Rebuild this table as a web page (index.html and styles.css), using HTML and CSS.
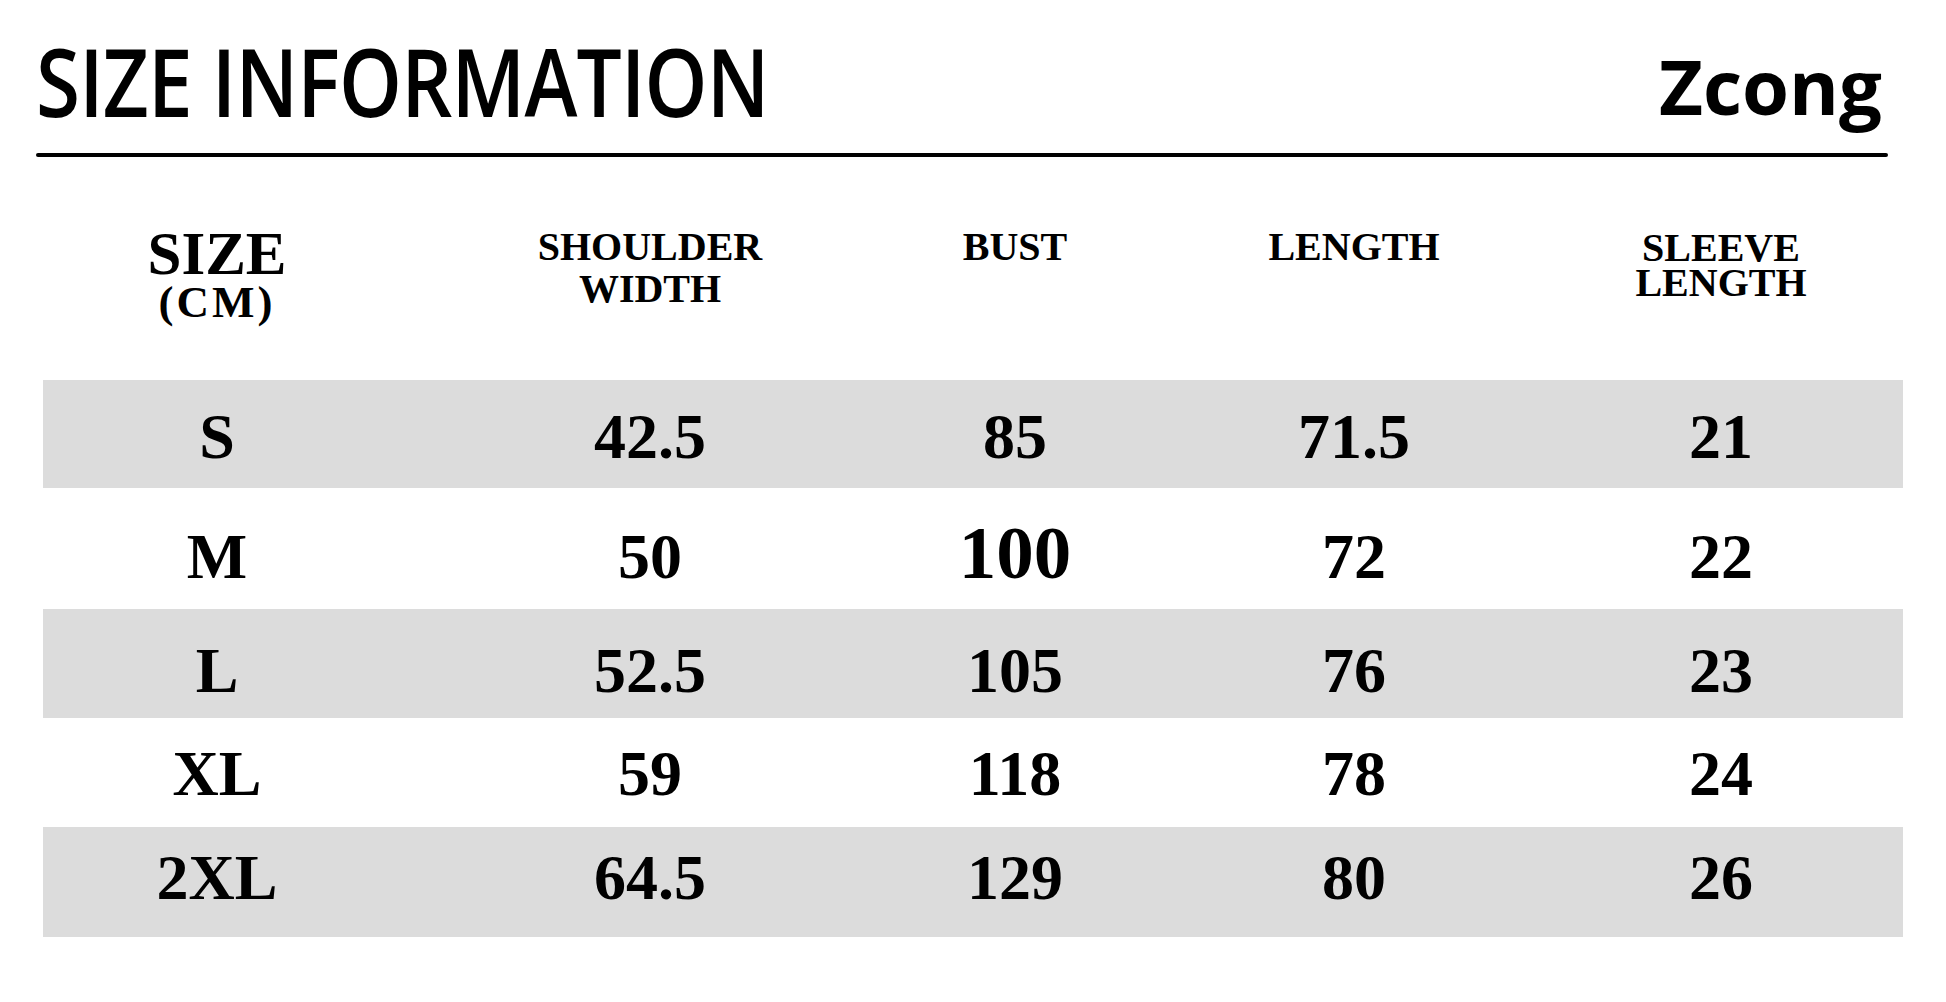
FILE: index.html
```html
<!DOCTYPE html>
<html lang="en">
<head>
<meta charset="utf-8">
<title>Size Information</title>
<link rel="stylesheet" href="styles.css">
</head>
<body>
<div class="sheet">
  <header class="topbar">
    <h1 class="title">SIZE INFORMATION</h1>
    <div class="brand">Zcong</div>
  </header>
  <div class="rule"></div>

  <div class="table">
    <div class="row head">
      <div class="cell size-head">
        <div class="size-main">SIZE</div>
        <div class="size-unit">(CM)</div>
      </div>
      <div class="cell col-head">SHOULDER<br>WIDTH</div>
      <div class="cell col-head">BUST</div>
      <div class="cell col-head">LENGTH</div>
      <div class="cell col-head col-head--tight">SLEEVE<br>LENGTH</div>
    </div>

    <div class="row data shade r-s">
      <div class="cell">S</div>
      <div class="cell">42.5</div>
      <div class="cell">85</div>
      <div class="cell">71.5</div>
      <div class="cell">21</div>
    </div>
    <div class="row data r-m">
      <div class="cell">M</div>
      <div class="cell">50</div>
      <div class="cell big">100</div>
      <div class="cell">72</div>
      <div class="cell">22</div>
    </div>
    <div class="row data shade r-l">
      <div class="cell">L</div>
      <div class="cell">52.5</div>
      <div class="cell">105</div>
      <div class="cell">76</div>
      <div class="cell">23</div>
    </div>
    <div class="row data r-xl">
      <div class="cell">XL</div>
      <div class="cell">59</div>
      <div class="cell">118</div>
      <div class="cell">78</div>
      <div class="cell">24</div>
    </div>
    <div class="row data shade r-2xl">
      <div class="cell">2XL</div>
      <div class="cell">64.5</div>
      <div class="cell">129</div>
      <div class="cell">80</div>
      <div class="cell">26</div>
    </div>
  </div>
</div>
</body>
</html>
```

FILE: styles.css
```css
* { box-sizing: border-box; }

html, body {
  margin: 0;
  padding: 0;
  background: #ffffff;
  color: #000000;
}

.sheet {
  width: 1946px;
  height: 1002px;
  overflow: hidden;
}

.topbar {
  display: flex;
  justify-content: space-between;
  align-items: flex-start;
  padding: 31px 64px 0 36px;
}

.title {
  margin: 0;
  font-family: "Open Sans", "Noto Sans", sans-serif;
  font-weight: 600;
  font-size: 94px;
  line-height: 100px;
  letter-spacing: -1px;
  white-space: nowrap;
  transform: scaleX(0.852);
  transform-origin: left center;
}

.brand {
  margin-top: 17px;
  font-family: "Open Sans", "Noto Sans", sans-serif;
  font-weight: 700;
  font-size: 76px;
  line-height: 76px;
}

.rule {
  margin: 22px 58px 0 36px;
  height: 4px;
  border-radius: 2px;
  background: #000;
}

.table {
  margin-left: 43px;
  width: 1860px;
  font-family: "Liberation Serif", "Times New Roman", serif;
  font-weight: 700;
}

.row {
  display: grid;
  grid-template-columns: 348px 518px 212px 466px 268px 1fr;
}

.cell {
  text-align: center;
  white-space: nowrap;
}

.head {
  height: 223px;
  padding-top: 69px;
  align-items: start;
}

.col-head {
  font-size: 40px;
  line-height: 42px;
}

.col-head--tight {
  line-height: 35px;
  padding-top: 4px;
}

.size-main {
  font-size: 61px;
  line-height: 56px;
}

.size-unit {
  font-size: 45px;
  line-height: 40px;
  letter-spacing: 3px;
}

.data {
  align-items: baseline;
}

.data .cell {
  font-size: 64px;
  line-height: 62px;
}

.data .big {
  font-size: 75px;
  line-height: 74px;
}

.shade {
  background: #dcdcdc;
}

.r-s   { height: 108px; padding-top: 26px; }
.r-m   { height: 121px; padding-top: 28px; }
.r-l   { height: 109px; padding-top: 31px; }
.r-xl  { height: 109px; padding-top: 25px; }
.r-2xl { height: 110px; padding-top: 20px; }
```
